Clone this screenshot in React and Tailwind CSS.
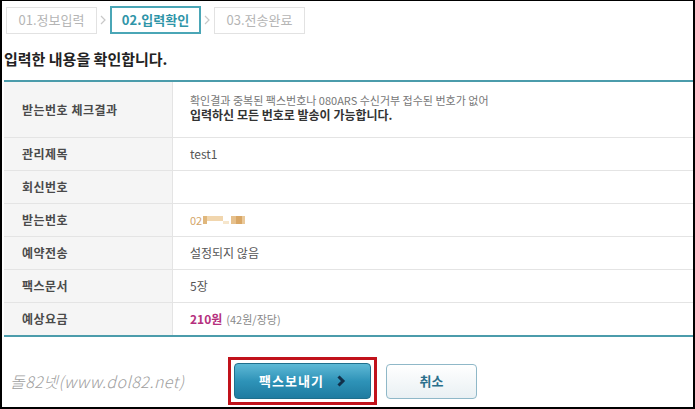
import React from 'react';

const font = { fontFamily: '"Noto Sans CJK KR", "Noto Sans", sans-serif' };

function Step({ label, active }) {
  return active ? (
    <div className="w-[91px] h-[28px] border-2 border-[#4aa6b6] flex items-center justify-center text-[13px] font-bold text-[#2f95a8] bg-white">
      {label}
    </div>
  ) : (
    <div className="w-[91px] h-[27px] border border-[#e2e2e2] flex items-center justify-center text-[13px] text-[#b5b5b5] bg-white">
      {label}
    </div>
  );
}

function Arrow() {
  return (
    <svg width="13" height="12" viewBox="0 0 13 12">
      <polyline points="4,2 8,6 4,10" fill="none" stroke="#c8c8c8" strokeWidth="1.2" />
    </svg>
  );
}

function Row({ label, children, h = 'h-[33px]' }) {
  return (
    <div className={`flex ${h} border-b border-[#e4e4e4]`}>
      <div className="w-[169px] shrink-0 bg-[#f5f5f5] border-r border-[#e4e4e4] flex items-center pl-[18px] text-[12px] font-bold text-[#4a4a4a] tracking-[0.5px]">
        {label}
      </div>
      <div className="flex-1 flex items-center pl-[17px] text-[12px] text-[#555]">{children}</div>
    </div>
  );
}

export default function App() {
  return (
    <div
      className="relative w-[695px] h-[409px] bg-white border-t border-l-2 border-r-2 border-b-2 border-black overflow-hidden"
      style={font}
    >
      {/* steps */}
      <div className="flex items-center pl-[4px] pt-[5px]">
        <Step label="01.정보입력" />
        <Arrow />
        <Step label="02.입력확인" active />
        <Arrow />
        <Step label="03.전송완료" />
      </div>

      <h1 className="mt-[15px] pl-[2px] text-[15px] font-bold text-[#222] leading-[20px]">입력한 내용을 확인합니다.</h1>

      {/* table */}
      <div className="mt-[11px] ml-[2px] border-t-2 border-b-2 border-[#4b9cab]">
        <Row label="받는번호 체크결과" h="h-[56px]">
          <div className="flex flex-col gap-[1px] -mt-[3px]">
            <span className="block text-[11px] leading-[13px] text-[#777]">확인결과 중복된 팩스번호나 080ARS 수신거부 접수된 번호가 없어</span>
            <span className="block text-[12px] leading-[14px] font-bold text-[#333]">입력하신 모든 번호로 발송이 가능합니다.</span>
          </div>
        </Row>
        <Row label="관리제목">test1</Row>
        <Row label="회신번호" />
        <Row label="받는번호">
          <div className="flex items-center text-[11px] text-[#d4a56a]">
            <span>02</span>
            <span className="inline-block w-[4px] h-[8px] bg-[#e0b77c] ml-[1px]" />
            <span className="inline-block w-[16px] h-[5px] bg-[#f1d6ae] -mt-[3px]" />
            <span className="inline-block w-[6px] h-[3px] bg-[#f6e6cc] mt-[4px]" />
            <span className="inline-block w-[5px] h-[8px] bg-[#e6c08c] ml-[2px]" />
            <span className="inline-block w-[6px] h-[8px] bg-[#d9a766]" />
            <span className="inline-block w-[3px] h-[8px] bg-[#eac99a]" />
          </div>
        </Row>
        <Row label="예약전송">설정되지 않음</Row>
        <Row label="팩스문서">5장</Row>
        <div className="flex h-[32px]">
          <div className="w-[169px] shrink-0 bg-[#f5f5f5] border-r border-[#e4e4e4] flex items-center pl-[18px] text-[12px] font-bold text-[#4a4a4a] tracking-[0.5px]">
            예상요금
          </div>
          <div className="flex-1 flex items-center pl-[17px] text-[12px] text-[#555] gap-[4px]">
            <span className="font-bold text-[#b5307e]">210원</span>
            <span className="text-[11px] text-[#888]">(42원/장당)</span>
          </div>
        </div>
      </div>

      {/* buttons */}
      <div className="flex justify-center items-center gap-[9px] mt-[20px] pl-[10px]">
        <div className="border-[3px] border-[#c1121b] p-[3px]">
          <button className="w-[137px] h-[36px] rounded-[4px] border border-[#1f6f8c] bg-gradient-to-b from-[#5db9d6] via-[#2e93b8] to-[#1f7ca1] text-white font-bold text-[13px] flex items-center justify-center gap-[12px] tracking-[1px]">
            팩스보내기
            <svg width="10" height="12" viewBox="0 0 10 12">
              <polyline points="2.5,1.5 7,6 2.5,10.5" fill="none" stroke="#12304a" strokeWidth="3" />
            </svg>
          </button>
        </div>
        <button className="w-[91px] h-[35px] rounded-[4px] border border-[#8fb8c8] bg-gradient-to-b from-white to-[#e9f0f3] text-[#2a6f8c] font-bold text-[13px]">
          취소
        </button>
      </div>

      {/* watermark */}
      <div
        className="absolute left-[8px] top-[368px] text-[16px] italic text-[#a0a0a0] tracking-[0.5px]"
        style={{ fontFamily: '"Noto Sans CJK KR", "DejaVu Sans", sans-serif', fontWeight: 300 }}
      >
        돌82넷(www.dol82.net)
      </div>
    </div>
  );
}
